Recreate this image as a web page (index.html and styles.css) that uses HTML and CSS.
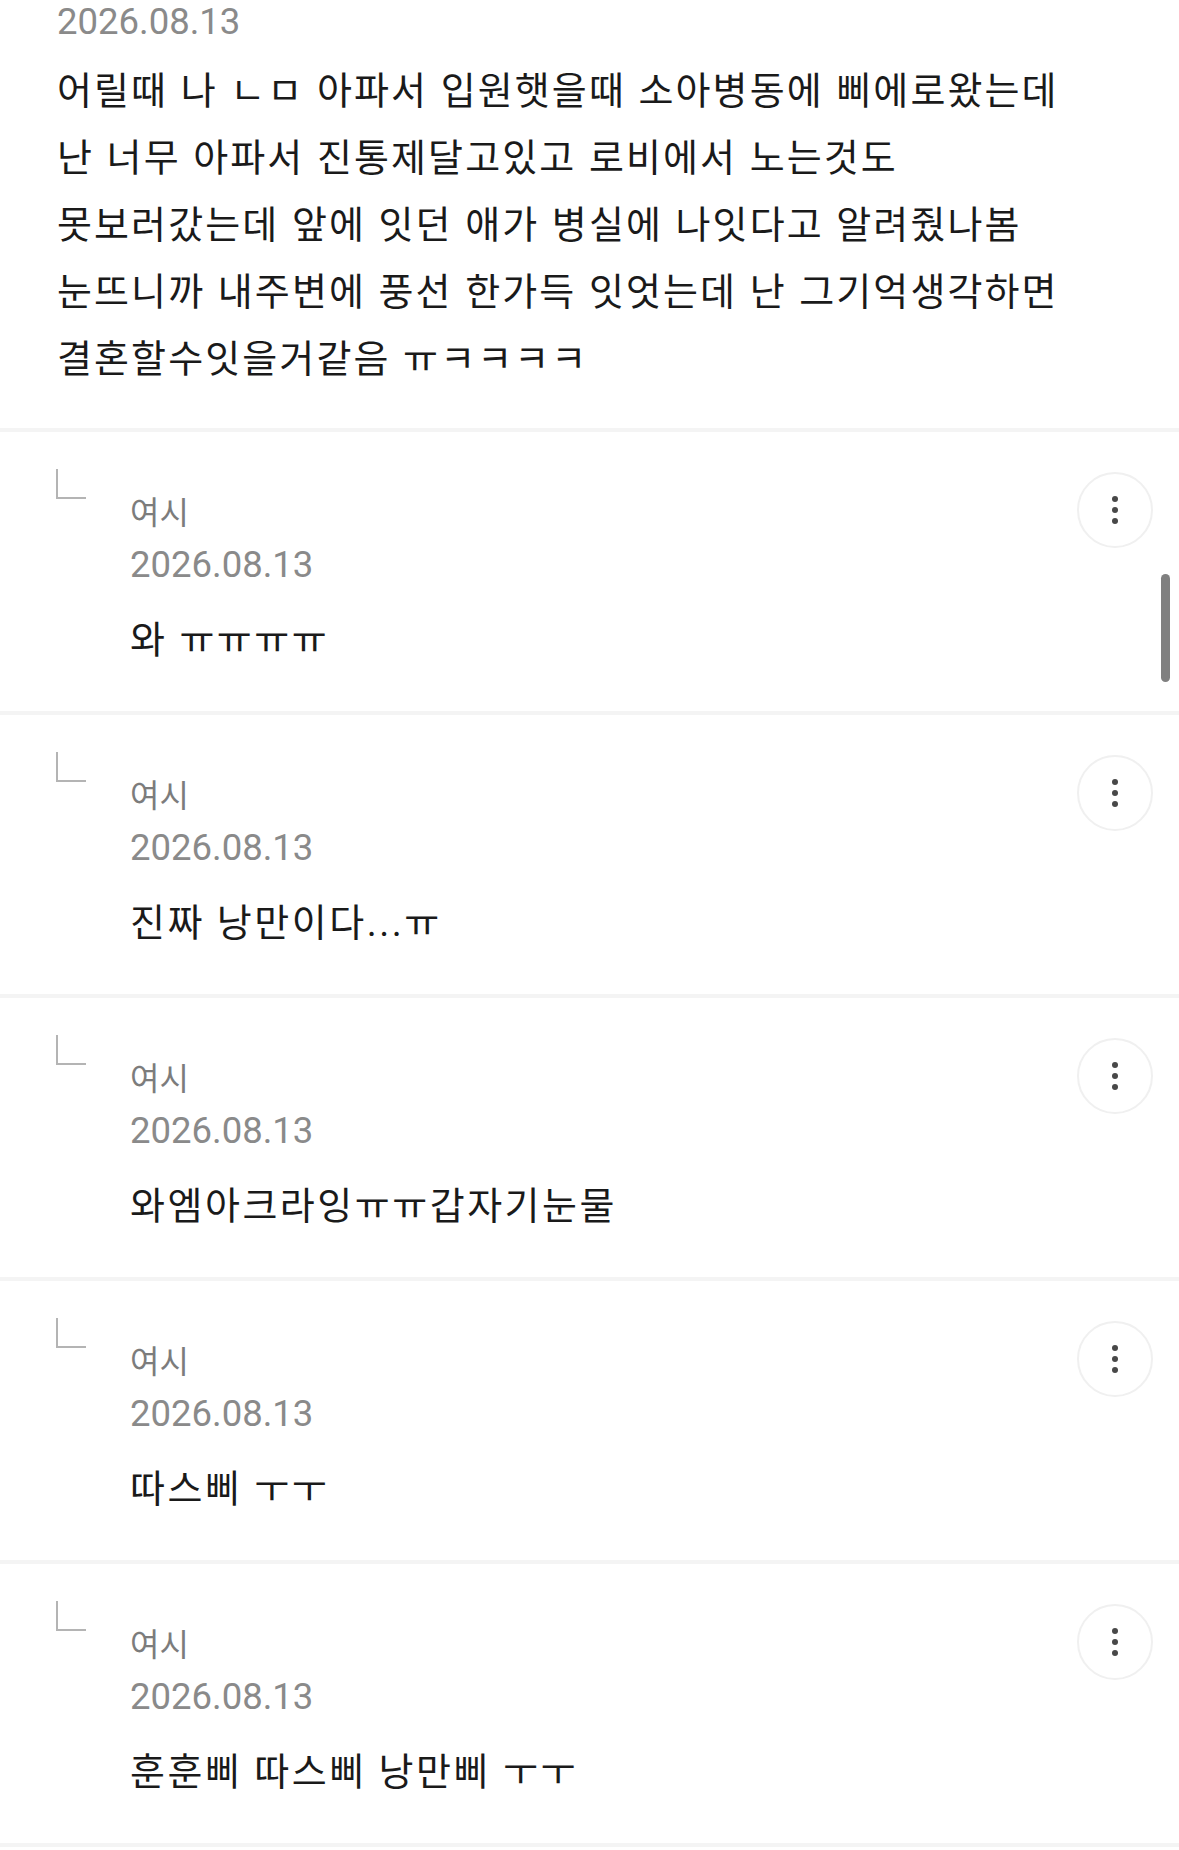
FILE: index.html
```html
<!DOCTYPE html>
<html lang="ko">
<head>
    <meta charset="UTF-8">
    <title>댓글</title>
    <link rel="stylesheet" href="styles.css">
</head>
<body>
    <div class="page">
        <div class="post">
            <div class="post-date">2026.08.13</div>
            <p class="post-body">
                어릴때 나 ㄴㅁ 아파서 입원햇을때 소아병동에 삐에로왔는데<br>
                난 너무 아파서 진통제달고있고 로비에서 노는것도<br>
                못보러갔는데 앞에 잇던 애가 병실에 나잇다고 알려줬나봄<br>
                눈뜨니까 내주변에 풍선 한가득 잇엇는데 난 그기억생각하면<br>
                결혼할수잇을거같음 ㅠㅋㅋㅋㅋ
            </p>
        </div>
        <ul class="replies">
            <li class="reply">
                <span class="reply-mark"></span>
                <div class="reply-main">
                    <div class="reply-name">여시</div>
                    <div class="reply-date">2026.08.13</div>
                    <p class="reply-text">와 ㅠㅠㅠㅠ</p>
                </div>
                <button class="reply-more" type="button"><i></i><i></i><i></i></button>
            </li>
            <li class="reply">
                <span class="reply-mark"></span>
                <div class="reply-main">
                    <div class="reply-name">여시</div>
                    <div class="reply-date">2026.08.13</div>
                    <p class="reply-text">진짜 낭만이다...ㅠ</p>
                </div>
                <button class="reply-more" type="button"><i></i><i></i><i></i></button>
            </li>
            <li class="reply">
                <span class="reply-mark"></span>
                <div class="reply-main">
                    <div class="reply-name">여시</div>
                    <div class="reply-date">2026.08.13</div>
                    <p class="reply-text">와엠아크라잉ㅠㅠ갑자기눈물</p>
                </div>
                <button class="reply-more" type="button"><i></i><i></i><i></i></button>
            </li>
            <li class="reply">
                <span class="reply-mark"></span>
                <div class="reply-main">
                    <div class="reply-name">여시</div>
                    <div class="reply-date">2026.08.13</div>
                    <p class="reply-text">따스삐 ㅜㅜ</p>
                </div>
                <button class="reply-more" type="button"><i></i><i></i><i></i></button>
            </li>
            <li class="reply">
                <span class="reply-mark"></span>
                <div class="reply-main">
                    <div class="reply-name">여시</div>
                    <div class="reply-date">2026.08.13</div>
                    <p class="reply-text">훈훈삐 따스삐 낭만삐 ㅜㅜ</p>
                </div>
                <button class="reply-more" type="button"><i></i><i></i><i></i></button>
            </li>
        </ul>
        <div class="scrollbar"></div>
    </div>
</body>
</html>
```

FILE: styles.css
```css
body, html {
    margin: 0;
    padding: 0;
    background: #fff;
}
.page {
    position: relative;
    width: 1179px;
    height: 1850px;
    overflow: hidden;
    font-family: Roboto, "Noto Sans CJK KR", sans-serif;
    color: #1a1a1a;
}
.post {
    padding: 4px 57px 35px;
}
.post-date {
    font-size: 36.5px;
    line-height: 36px;
    color: #8a8a8a;
}
.post-body {
    margin: 18px 0 0;
    font-size: 38px;
    line-height: 67px;
    letter-spacing: 2.1px;
    word-spacing: 1px;
}
.replies {
    list-style: none;
    margin: 0;
    padding: 0;
}
.reply {
    display: flex;
    align-items: flex-start;
    padding: 37px 26px 37px 56px;
    border-top: 4px solid #f4f4f4;
}
.reply:last-child {
    border-bottom: 4px solid #f4f4f4;
}
.reply-mark {
    flex: none;
    width: 30px;
    height: 30px;
    border-left: 2px solid #b4b4b4;
    border-bottom: 2px solid #b4b4b4;
    box-sizing: border-box;
}
.reply-main {
    flex: 1;
    padding-top: 20px;
    margin-left: 44px;
}
.reply-name {
    font-size: 32px;
    line-height: 48px;
    color: #7c7c7c;
}
.reply-date {
    font-size: 36.5px;
    line-height: 56px;
    color: #8a8a8a;
}
.reply-text {
    margin: 14px 0 0;
    font-size: 38px;
    line-height: 67px;
    letter-spacing: 2.5px;
    word-spacing: 0;
}
.reply-more {
    flex: none;
    margin-top: 3px;
    width: 76px;
    height: 76px;
    padding: 0;
    border: 2px solid #f0f0f0;
    border-radius: 50%;
    background: #fff;
    display: flex;
    flex-direction: column;
    align-items: center;
    justify-content: center;
    gap: 5px;
}
.reply-more i {
    display: block;
    width: 6px;
    height: 6px;
    border-radius: 50%;
    background: #484848;
}
.scrollbar {
    position: absolute;
    top: 574px;
    right: 9px;
    width: 9px;
    height: 108px;
    border-radius: 5px;
    background: #808080;
}
```
